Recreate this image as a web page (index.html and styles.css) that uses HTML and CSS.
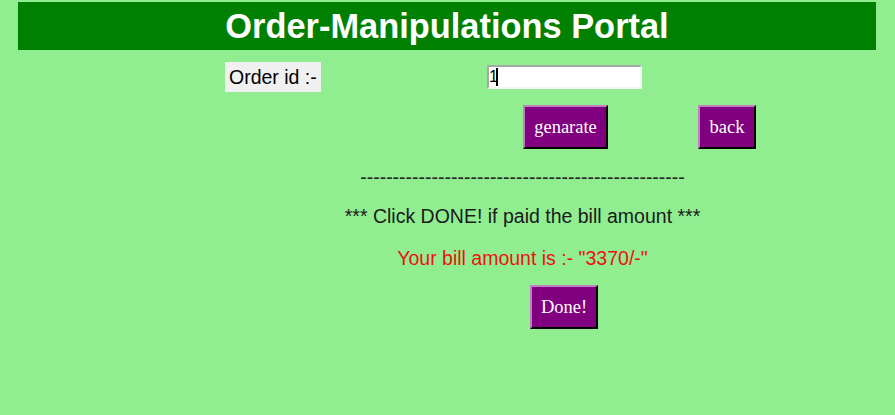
FILE: index.html
```html
<!DOCTYPE html>
<html>
<head>
<meta charset="utf-8">
<link rel="stylesheet" href="styles.css">
</head>
<body>
<h1 class="title">Order-Manipulations Portal</h1>
<div class="row row-id">
  <label class="label" for="oid">Order id :-</label>
  <span class="field-wrap">
    <input id="oid" class="field" type="text" value="1">
    <span class="caret"></span>
  </span>
</div>
<div class="row row-btns">
  <button class="btn btn-gen">genarate</button>
  <button class="btn btn-back">back</button>
</div>
<div class="result">
  <p class="dashes">--------------------------------------------------</p>
  <p class="note">*** Click DONE! if paid the bill amount ***</p>
  <p class="bill">Your bill amount is :- "3370/-"</p>
  <div class="done-row"><button class="btn btn-done">Done!</button></div>
</div>
</body>
</html>
```
FILE: styles.css
```css
html, body {
  margin: 0;
  padding: 0;
}
body {
  background: #90ee90;
  font-family: "Liberation Sans", Arial, sans-serif;
  width: 895px;
  height: 415px;
  overflow: hidden;
  padding-top: 2px;
  box-sizing: border-box;
}
.title {
  margin: 0 19px 0 18px;
  height: 48px;
  background: #008000;
  color: #ffffff;
  font-size: 34.4px;
  font-weight: bold;
  line-height: 48px;
  text-align: center;
}
.row {
  display: flex;
  align-items: flex-start;
}
.row-id {
  margin-top: 12px;
  padding-left: 225px;
}
.label {
  width: 96px;
  height: 30px;
  box-sizing: border-box;
  background: #f0f0f0;
  color: #000;
  font-size: 19.5px;
  line-height: 30px;
  padding-left: 4px;
  white-space: nowrap;
}
.field-wrap {
  position: relative;
  margin-left: 166px;
  margin-top: 3px;
}
.field {
  width: 155px;
  height: 24px;
  box-sizing: border-box;
  border: 2px solid #f4f4f4;
  border-top-color: #a8a8a8;
  border-left-color: #a8a8a8;
  background: #fff;
  font-family: "Liberation Sans", Arial, sans-serif;
  font-size: 16px;
  padding: 0;
  margin: 0;
  display: block;
  outline: none;
}
.caret {
  position: absolute;
  left: 9px;
  top: 3px;
  width: 2px;
  height: 18px;
  background: #000;
}
.row-btns {
  margin-top: 13px;
  padding-left: 523px;
}
.btn {
  background: #800080;
  color: #ffffff;
  font-family: "Liberation Serif", "Times New Roman", serif;
  font-size: 18.5px;
  border: 2px solid;
  border-color: #c080c0 #000 #000 #c080c0;
  height: 44px;
  padding: 0;
  margin: 0;
  box-sizing: border-box;
}
.btn-gen { width: 85px; }
.btn-back { width: 58px; margin-left: 90px; }
.result {
  margin-left: 169px;
  width: 707px;
  text-align: center;
}
.dashes {
  margin: 18px 0 0;
  font-size: 19.5px;
  line-height: 21px;
  color: #222;
}
.note {
  margin: 18px 0 0;
  font-size: 19.5px;
  line-height: 21px;
  color: #1a1a1a;
}
.bill {
  margin: 21px 0 0;
  font-size: 19.5px;
  line-height: 21px;
  color: #ee1111;
}
.done-row {
  margin-top: 16px;
  padding-left: 361px;
  text-align: left;
}
.btn-done { width: 68px; }
```
